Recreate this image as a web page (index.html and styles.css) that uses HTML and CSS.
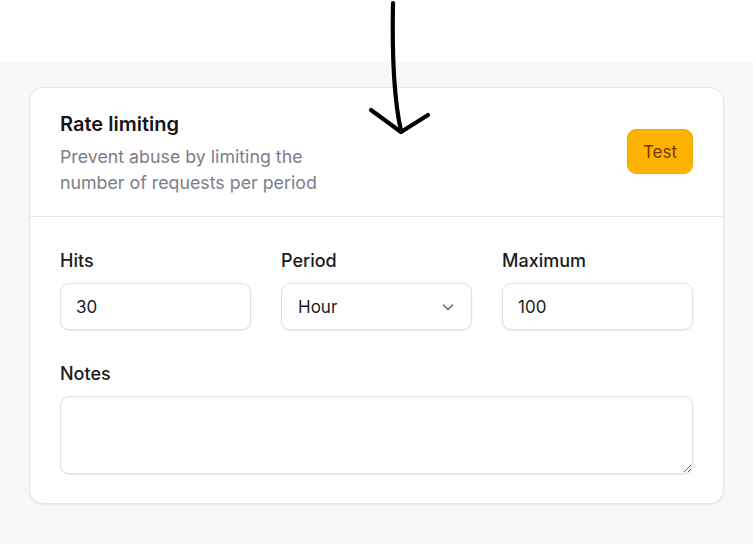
FILE: index.html
```html
<!DOCTYPE html>
<html lang="en">
<head>
<meta charset="utf-8">
<title>Rate limiting</title>
<link rel="stylesheet" href="styles.css">
</head>
<body>
<div class="top"></div>
<main class="stage">
  <section class="card">
    <header class="card-head">
      <div class="head-text">
        <h2 class="title">Rate limiting</h2>
        <p class="desc">Prevent abuse by limiting the<br>number of requests per period</p>
      </div>
      <button class="btn-test" type="button">Test</button>
    </header>
    <div class="card-body">
      <div class="row">
        <label class="field">
          <span class="label">Hits</span>
          <input class="input" type="text" value="30">
        </label>
        <label class="field">
          <span class="label">Period</span>
          <span class="select">
            <span>Hour</span>
            <svg class="chev" width="14" height="14" viewBox="0 0 14 14"><path d="M2.5 5 L7 9.5 L11.5 5" fill="none" stroke="#6b6b6b" stroke-width="1.6" stroke-linecap="round" stroke-linejoin="round"/></svg>
          </span>
        </label>
        <label class="field">
          <span class="label">Maximum</span>
          <input class="input" type="text" value="100">
        </label>
      </div>
      <label class="field notes">
        <span class="label">Notes</span>
        <textarea class="textarea"></textarea>
      </label>
    </div>
  </section>
</main>
<svg class="arrow" width="753" height="140" viewBox="0 0 753 140">
  <path d="M393 3 C392 50 393 95 401 131" fill="none" stroke="#000" stroke-width="4.2" stroke-linecap="round"/>
  <path d="M371 110 L401 132 L428 115" fill="none" stroke="#000" stroke-width="4.2" stroke-linecap="round" stroke-linejoin="round"/>
</svg>
</body>
</html>
```

FILE: styles.css
```css
* { box-sizing: border-box; }
html, body { margin: 0; padding: 0; }
body {
  background: #ffffff;
  font-family: Inter, "Noto Sans", "Liberation Sans", sans-serif;
  color: #1b1b1f;
  width: 753px;
  height: 544px;
  overflow: hidden;
  position: relative;
}
.top { height: 62px; background: #ffffff; }
.stage {
  background: #f8f8f8;
  padding: 25px 29px 40px;
  min-height: 482px;
}
.card {
  background: #ffffff;
  border: 1px solid #e6e6e6;
  border-radius: 14px;
  box-shadow: 0 1px 2px rgba(0,0,0,0.06);
}
.card-head {
  display: flex;
  align-items: center;
  justify-content: space-between;
  padding: 23px 30px 20px 30px;
  border-bottom: 1px solid #e8e8e8;
}
.title {
  margin: 0 0 7px;
  font-size: 20px;
  line-height: 26px;
  font-weight: 600;
  color: #161618;
}
.desc {
  margin: 0;
  font-size: 17.8px;
  line-height: 26px;
  color: #7d7d87;
}
.btn-test {
  width: 66px;
  height: 45px;
  border: 1px solid #f5ab00;
  background: #ffb300;
  color: #6e3900;
  font-family: inherit;
  font-size: 17px;
  border-radius: 9px;
  padding: 0;
  margin-top: -4px;
}
.card-body { padding: 32px 30px 29px; }
.row {
  display: grid;
  grid-template-columns: 1fr 1fr 1fr;
  column-gap: 30px;
}
.field { display: flex; flex-direction: column; }
.label {
  font-size: 18px;
  line-height: 24px;
  font-weight: 500;
  color: #1b1b1f;
  margin-bottom: 10px;
}
.input, .select, .textarea {
  border: 1px solid #e2e2e2;
  border-radius: 9px;
  background: #fff;
  box-shadow: 0 1px 2px rgba(0,0,0,0.08);
  font-family: inherit;
  font-size: 17px;
  color: #1b1b1f;
}
.input {
  height: 47px;
  padding: 0 15px;
  width: 100%;
  outline: none;
}
.select {
  height: 47px;
  display: flex;
  align-items: center;
  justify-content: space-between;
  padding: 0 16px 0 16px;
}
.chev { display: block; }
.notes { margin-top: 32px; }
.textarea {
  height: 78px;
  width: 100%;
  resize: vertical;
  padding: 10px 15px;
  outline: none;
}
.arrow {
  position: absolute;
  left: 0;
  top: 0;
  pointer-events: none;
}
```
